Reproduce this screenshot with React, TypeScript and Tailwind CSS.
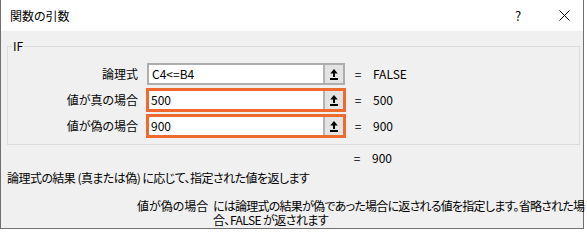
import React from "react";

function RefButton() {
  return (
    <div className="flex h-full w-[20px] shrink-0 items-center justify-center border-l-2 border-[#b4b4b4] bg-[#e3e3e3]">
      <svg width="8" height="11" viewBox="0 0 8 11">
        <polygon points="4,0 0.3,4.6 3,4.6 3,8 5,8 5,4.6 7.7,4.6" fill="#000" />
        <rect x="0" y="9" width="8" height="2" fill="#000" />
      </svg>
    </div>
  );
}

function ArgRow({
  label,
  value,
  result,
  highlight,
}: {
  label: string;
  value: string;
  result: string;
  highlight?: boolean;
}) {
  return (
    <div className="flex h-[24px] items-center">
      <div className="w-[130px] shrink-0 text-right">{label}</div>
      <div className="ml-[8px] h-[24px] w-[200px] shrink-0">
        {highlight ? (
          <div className="flex h-full border-[3px] border-[#ef6a2c] bg-white">
            <div className="flex-1 pl-[2px] leading-[18px]">{value}</div>
            <RefButton />
          </div>
        ) : (
          <div className="h-full p-px">
            <div className="flex h-full border-2 border-[#adadad] bg-white">
              <div className="flex-1 pl-[3px] leading-[18px]">{value}</div>
              <RefButton />
            </div>
          </div>
        )}
      </div>
      <div className="ml-[3px] w-[18px] text-center">=</div>
      <div className="ml-[6px]">{result}</div>
    </div>
  );
}

export default function App() {
  return (
    <div className="h-[230px] w-[587px] bg-white font-['Noto_Sans_CJK_JP',sans-serif] text-[12px] leading-[16px] text-black [font-feature-settings:'palt']">
      <div className="flex h-[229px] w-[584px] flex-col border-x border-b border-[#707070]">
        {/* title bar */}
        <div className="flex h-[31px] shrink-0 items-center bg-white pl-[9px]">
          <span>関数の引数</span>
          <span className="ml-auto w-[20px] text-center text-[13px]">?</span>
          <span className="ml-[26px] mr-[9px] flex w-[20px] justify-center">
            <svg width="11" height="11" viewBox="0 0 11 11">
              <path d="M0.5 0.5 L10.5 10.5 M10.5 0.5 L0.5 10.5" stroke="#000" strokeWidth="1" />
            </svg>
          </span>
        </div>

        {/* body */}
        <div className="flex-1 bg-[#f0f0f0]">
          <div className="relative ml-[6px] mt-[15px] h-[99px] w-[573px] border border-[#dcdcdc]">
            <span className="absolute left-[4px] top-[-9px] bg-[#f0f0f0] px-[1px]">IF</span>
            <div className="flex flex-col gap-[2px] pt-[15px]">
              <ArgRow label="論理式" value="C4<=B4" result="FALSE" />
              <ArgRow label="値が真の場合" value="500" result="500" highlight />
              <ArgRow label="値が偽の場合" value="900" result="900" highlight />
            </div>
          </div>

          <div className="mt-[5px] flex pl-[347px]">
            <div className="w-[18px] text-center">=</div>
            <div className="ml-[6px]">900</div>
          </div>

          <div className="mt-[4px] pl-[6px] tracking-[-0.55px]">
            論理式の結果 (真または偽) に応じて、指定された値を返します
          </div>

          <div className="mt-[13px] flex pl-[136px] leading-[14px]">
            <div className="w-[76px] shrink-0">値が偽の場合</div>
            <div className="tracking-[-0.75px]">
              <div className="whitespace-nowrap">には論理式の結果が偽であった場合に返される値を指定します。省略された場</div>
              <div className="tracking-[-0.55px]">合、FALSE が返されます</div>
            </div>
          </div>
        </div>
      </div>
    </div>
  );
}
